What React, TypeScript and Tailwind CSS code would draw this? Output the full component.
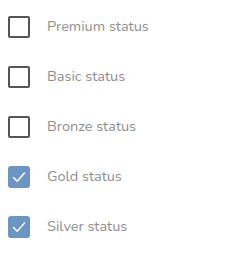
import { useState } from "react";

type Item = { label: string; checked: boolean };

const initial: Item[] = [
  { label: "Premium status", checked: false },
  { label: "Basic status", checked: false },
  { label: "Bronze status", checked: false },
  { label: "Gold status", checked: true },
  { label: "Silver status", checked: true },
];

export default function App() {
  const [items, setItems] = useState(initial);

  const toggle = (i: number) =>
    setItems((prev) =>
      prev.map((it, idx) => (idx === i ? { ...it, checked: !it.checked } : it))
    );

  return (
    <main className="min-h-screen bg-white pt-[16px] pl-[8px] font-['Nunito','Lato',sans-serif]">
      <ul className="flex flex-col gap-[28px]">
        {items.map((it, i) => (
          <li key={it.label}>
            <button
              type="button"
              onClick={() => toggle(i)}
              className="flex h-[22px] items-center gap-[17px]"
            >
              {it.checked ? (
                <span className="flex h-[22px] w-[22px] items-center justify-center rounded-[3px] bg-[#6b95c2]">
                  <svg width="16" height="16" viewBox="0 0 16 16" fill="none">
                    <path
                      d="M2.5 8.5 L6.2 12.2 L13.5 4"
                      stroke="white"
                      strokeWidth="1.5"
                      strokeLinecap="round"
                      strokeLinejoin="round"
                    />
                  </svg>
                </span>
              ) : (
                <span className="h-[22px] w-[22px] rounded-[2px] border-2 border-[#555555]" />
              )}
              <span className="text-[14.5px] text-[#8f8f8f]">{it.label}</span>
            </button>
          </li>
        ))}
      </ul>
    </main>
  );
}
